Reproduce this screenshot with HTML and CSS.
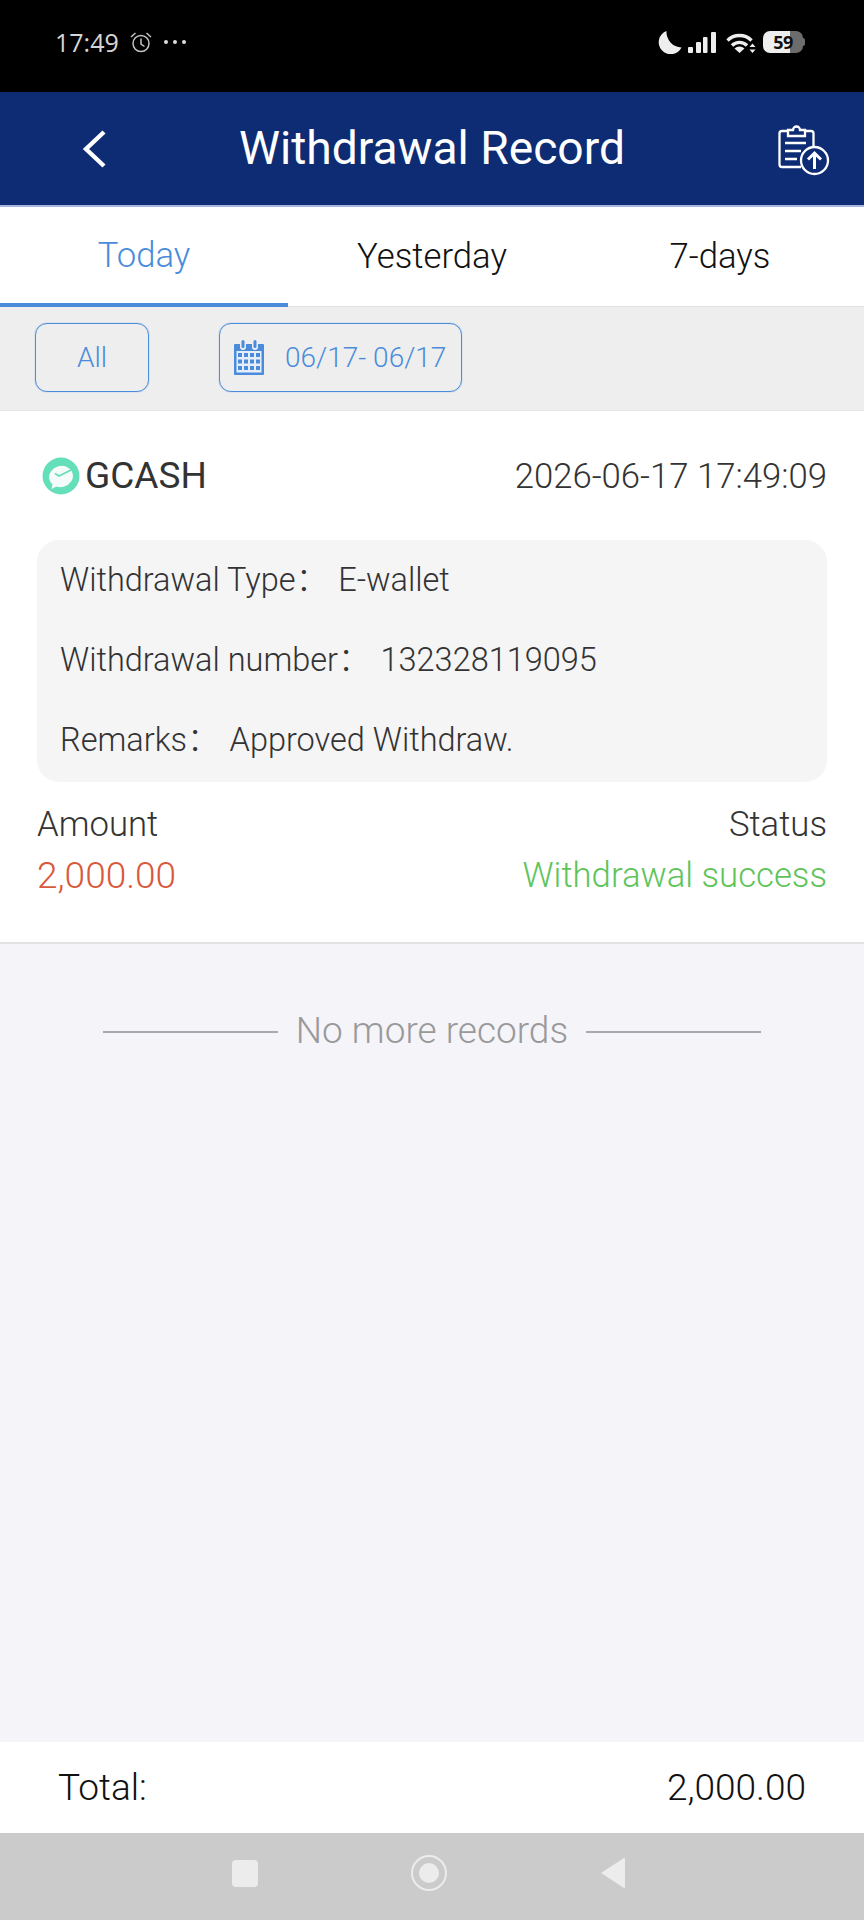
FILE: index.html
```html
<!DOCTYPE html>
<html lang="en">
<head>
    <meta charset="UTF-8">
    <meta name="viewport" content="width=device-width, initial-scale=1.0">
    <title>Withdrawal Record</title>
    <link rel="stylesheet" href="styles.css">
</head>
<body>
    <div class="status-bar">
        <div class="status-left">
            <span class="clock">17:49</span>
            <svg class="alarm" width="22" height="21" viewBox="0 0 22 21" fill="none" stroke="#c4c4c4" stroke-width="1.5">
                <circle cx="11" cy="11.500" r="8"/>
                <path d="M11 6.500v5.500l3.500 2.500"/>
                <path d="M1 5 5.500 1M21 5 16.500 1"/>
            </svg>
            <span class="dots"><i></i><i></i><i></i></span>
        </div>
        <div class="status-right">
            <svg width="25" height="23" viewBox="0 0 25 23"><path d="M9.500 0a12 12 0 1 0 15 16.500A15.500 15.500 0 0 1 9.500 0z" fill="#eee"/></svg>
            <svg class="signal" width="28" height="21" viewBox="0 0 28 21" fill="#eee">
                <rect x="0" y="15" width="5" height="6" rx="1"/>
                <rect x="8" y="10" width="5" height="11" rx="1"/>
                <rect x="15" y="5" width="4.500" height="16" rx="1"/>
                <rect x="23" y="0" width="5" height="21" rx="1"/>
            </svg>
            <svg class="wifi" width="30" height="21" viewBox="0 0 30 21" fill="none" stroke="#eee" stroke-width="3.400">
                <path d="M1.500 8.500a17 17 0 0 1 24 0"/>
                <path d="M6 13.500a10.500 10.500 0 0 1 15 0"/>
                <path d="M13.500 21 8.500 16.500a7.500 7.500 0 0 1 10 0z" fill="#eee" stroke="none"/>
                <path d="M26.500 11.500l3 3.500h-6zM26.500 21l3-3.500h-6z" fill="#eee" stroke="none"/>
            </svg>
            <div class="battery"><span class="battery-level">59</span></div>
            <span class="battery-cap"></span>
        </div>
    </div>

    <header class="nav-bar">
        <svg class="back" width="24" height="38" viewBox="0 0 24 38" fill="none" stroke="#fff" stroke-width="4.400">
            <path d="M22 2 4 19l18 17"/>
        </svg>
        <h1>Withdrawal Record</h1>
        <svg class="upload" width="52" height="54" viewBox="0 0 52 54" fill="none" stroke="#fff" stroke-width="2.300">
            <path d="M10 8H4a2.500 2.500 0 0 0-2.500 2.500v31A2.500 2.500 0 0 0 4 44h19"/>
            <path d="M27 8h6a2.500 2.500 0 0 1 2.500 2.500V24"/>
            <path d="M10 13V7h5a3.500 3.500 0 0 1 7 0h5v6z"/>
            <path d="M7 20h21M7 28h16M7 36h12"/>
            <circle cx="36.500" cy="37.500" r="13.500"/>
            <path d="M36.500 46V30M30 36.500l6.500-6.500 6.500 6.500" stroke-width="3"/>
        </svg>
    </header>

    <nav class="tabs">
        <div class="tab active">Today</div>
        <div class="tab">Yesterday</div>
        <div class="tab">7-days</div>
    </nav>

    <div class="filters">
        <div class="chip chip-all">All</div>
        <div class="chip chip-date">
            <svg width="32" height="36" viewBox="0 0 32 36" fill="#4a8cdb">
                <path d="M2 5h5v3a3 3 0 0 0 6 0V5h6v3a3 3 0 0 0 6 0V5h5a1 1 0 0 1 1 1v29a1 1 0 0 1-1 1H2a1 1 0 0 1-1-1V6a1 1 0 0 1 1-1z"/>
                <rect x="8.500" y="1" width="3" height="8" rx="1.500"/>
                <rect x="20.500" y="1" width="3" height="8" rx="1.500"/>
                <rect x="3.500" y="12" width="25" height="21.500" fill="#e6eef9"/>
                <g>
                    <rect x="5" y="14" width="4" height="4"/><rect x="11" y="14" width="4" height="4"/><rect x="17" y="14" width="4" height="4"/><rect x="23" y="14" width="4" height="4"/>
                    <rect x="5" y="20.500" width="4" height="4"/><rect x="11" y="20.500" width="4" height="4"/><rect x="17" y="20.500" width="4" height="4"/><rect x="23" y="20.500" width="4" height="4"/>
                    <rect x="5" y="27" width="4" height="4"/><rect x="11" y="27" width="4" height="4"/><rect x="17" y="27" width="4" height="4"/><rect x="23" y="27" width="4" height="4"/>
                </g>
            </svg>
            <span>06/17- 06/17</span>
        </div>
    </div>

    <section class="record">
        <div class="record-head">
            <div class="channel">
                <svg width="38" height="38" viewBox="0 0 38 38">
                    <circle cx="19" cy="19" r="18.500" fill="#64dfb9"/>
                    <ellipse cx="19" cy="19.500" rx="12" ry="10.500" fill="#f4fbf9" transform="rotate(-15 19 19.500)"/>
                    <path d="M11 25l-1.500 7 8-4z" fill="#f4fbf9"/>
                    <path d="M13 16.500l4 2.500 12-6" fill="none" stroke="#64dfb9" stroke-width="1.800"/>
                </svg>
                <span>GCASH</span>
            </div>
            <div class="record-time">2026-06-17 17:49:09</div>
        </div>
        <div class="record-info">
            <div class="info-row"><span class="info-label">Withdrawal Type：</span><span>E-wallet</span></div>
            <div class="info-row"><span class="info-label">Withdrawal number：</span><span>132328119095</span></div>
            <div class="info-row"><span class="info-label">Remarks：</span><span>Approved Withdraw.</span></div>
        </div>
        <div class="record-foot">
            <div>
                <div class="foot-label">Amount</div>
                <div class="amount">2,000.00</div>
            </div>
            <div class="foot-right">
                <div class="foot-label">Status</div>
                <div class="state">Withdrawal success</div>
            </div>
        </div>
    </section>

    <main class="list-end">
        <div class="no-more">
            <span class="line"></span>
            <span class="no-more-text">No more records</span>
            <span class="line"></span>
        </div>
    </main>

    <div class="total">
        <span>Total:</span>
        <span>2,000.00</span>
    </div>

    <div class="sys-nav">
        <span class="sys-square"></span>
        <span class="sys-circle"><i></i></span>
        <svg width="26" height="32" viewBox="0 0 26 32"><path d="M24 1a1 1 0 0 1 1 1v28a1 1 0 0 1-1 1L1 16z" fill="#ececec"/></svg>
    </div>
</body>
</html>
```

FILE: styles.css
```css
* {
    box-sizing: border-box;
}
html, body {
    margin: 0;
    padding: 0;
}
body {
    width: 864px;
    height: 1920px;
    display: flex;
    flex-direction: column;
    font-family: Roboto, "Noto Sans CJK SC", "Liberation Sans", sans-serif;
    font-weight: 300;
    background-color: #f4f4f9;
    color: #333;
}

/* phone status bar */
.status-bar {
    height: 92px;
    flex: none;
    background-color: #000;
    display: flex;
    justify-content: space-between;
    align-items: center;
    padding: 0 59px 8px 55px;
}
.status-left, .status-right {
    display: flex;
    align-items: center;
}
.clock {
    font-family: "Open Sans", sans-serif;
    font-size: 25px;
    font-weight: 500;
    color: #d6d6d6;
}
.alarm {
    margin-left: 11px;
}
.dots {
    display: flex;
    gap: 5px;
    margin-left: 12px;
}
.dots i {
    width: 4px;
    height: 4px;
    border-radius: 50%;
    background-color: #ddd;
}
.signal {
    margin-left: 6px;
}
.wifi {
    margin-left: 10px;
}
.battery {
    width: 40px;
    height: 22px;
    margin-left: 7px;
    border-radius: 7px;
    background: linear-gradient(90deg, #eee 67%, #6c6c6c 67%);
    display: flex;
    align-items: center;
    justify-content: center;
}
.battery-cap {
    width: 2px;
    height: 8px;
    border-radius: 0 2px 2px 0;
    background-color: #6c6c6c;
}
.battery-level {
    font-family: "Open Sans", sans-serif;
    font-size: 18px;
    font-weight: 700;
    color: #111;
    letter-spacing: -0.5px;
}

/* title bar */
.nav-bar {
    height: 115px;
    flex: none;
    background-color: #0e2c74;
    border-bottom: 2px solid #a7b6dc;
    display: grid;
    grid-template-columns: 1fr auto 1fr;
    align-items: center;
    padding: 0 32px;
}
.back {
    margin-left: 50px;
}
.upload {
    justify-self: end;
    margin: 2px 2px 0 0;
}
.nav-bar h1 {
    margin: 0 0 2px;
    font-size: 46.200px;
    font-weight: 400;
    color: #fff;
}

/* tabs */
.tabs {
    height: 100px;
    flex: none;
    display: flex;
    background-color: #fff;
    border-bottom: 1px solid #e0e0e0;
}
.tab {
    flex: 1;
    display: flex;
    align-items: center;
    justify-content: center;
    padding-bottom: 2px;
    font-size: 34.700px;
    color: #111;
}
.tab.active {
    color: #4a8cdb;
    box-shadow: inset 0 -4px 0 #4a8cdb;
    margin-bottom: -1px;
    padding-bottom: 4px;
}

/* filter row */
.filters {
    height: 104px;
    flex: none;
    display: flex;
    align-items: center;
    background-color: #eeeeef;
    padding: 0 35px 3px;
    border-bottom: 1px solid #e5e5e5;
}
.chip {
    height: 69px;
    border: 1px solid #4a8cdb;
    box-shadow: 0 0 1px #4a8cdb;
    border-radius: 12px;
    color: #4a8cdb;
    font-size: 28px;
    display: flex;
    align-items: center;
}
.chip-all {
    width: 114px;
    justify-content: center;
}
.chip-date {
    width: 243px;
    margin-left: 70px;
    padding-left: 13px;
    gap: 20px;
}

/* record card */
.record {
    flex: none;
    height: 533px;
    background-color: #fff;
    border-bottom: 2px solid #e2e2e2;
    padding: 0 37px;
}
.record-head {
    height: 129px;
    display: flex;
    align-items: center;
    justify-content: space-between;
}
.channel {
    display: flex;
    align-items: center;
    gap: 5px;
    margin-left: 5px;
    font-size: 37px;
    font-weight: 400;
}
.record-time {
    font-size: 34.700px;
}
.record-info {
    height: 242px;
    background-color: #f5f5f6;
    border-radius: 22px;
    padding: 0 24px 2px 23px;
    display: flex;
    flex-direction: column;
    justify-content: space-around;
    font-size: 32.500px;
}
.info-row {
    line-height: 40px;
}
.info-label {
    margin-right: 10px;
}
.record-foot {
    display: flex;
    justify-content: space-between;
    padding-top: 23px;
}
.foot-right {
    text-align: right;
}
.foot-label {
    font-size: 34.700px;
    line-height: 38px;
}
.amount, .state {
    line-height: 40px;
    margin-top: 13px;
}
.amount {
    font-size: 37px;
    color: #d8593b;
}
.state {
    font-size: 34.700px;
    margin-top: 12px;
    color: #5ec45a;
}

/* empty space under the list */
.list-end {
    flex: 1;
    padding-top: 65px;
}
.no-more {
    display: flex;
    align-items: center;
    justify-content: center;
    gap: 18px;
    font-size: 37px;
    color: #999;
}
.no-more-text {
    padding-bottom: 3px;
}
.line {
    width: 175px;
    height: 2px;
    background-color: #a9a9ad;
}

/* footer */
.total {
    height: 91px;
    flex: none;
    background-color: #fff;
    display: flex;
    align-items: center;
    justify-content: space-between;
    padding: 0 58px;
    font-size: 37px;
    color: #111;
}
.sys-nav {
    height: 87px;
    flex: none;
    background-color: #cbcbcb;
    display: flex;
    align-items: center;
    justify-content: space-between;
    padding: 0 238px 7px 232px;
}
.sys-square {
    width: 26px;
    height: 27px;
    border-radius: 4px;
    background-color: #ececec;
}
.sys-circle {
    width: 36px;
    height: 36px;
    border: 2px solid #ececec;
    border-radius: 50%;
    display: flex;
    align-items: center;
    justify-content: center;
}
.sys-circle i {
    width: 20px;
    height: 20px;
    border-radius: 50%;
    background-color: #ececec;
}
```
